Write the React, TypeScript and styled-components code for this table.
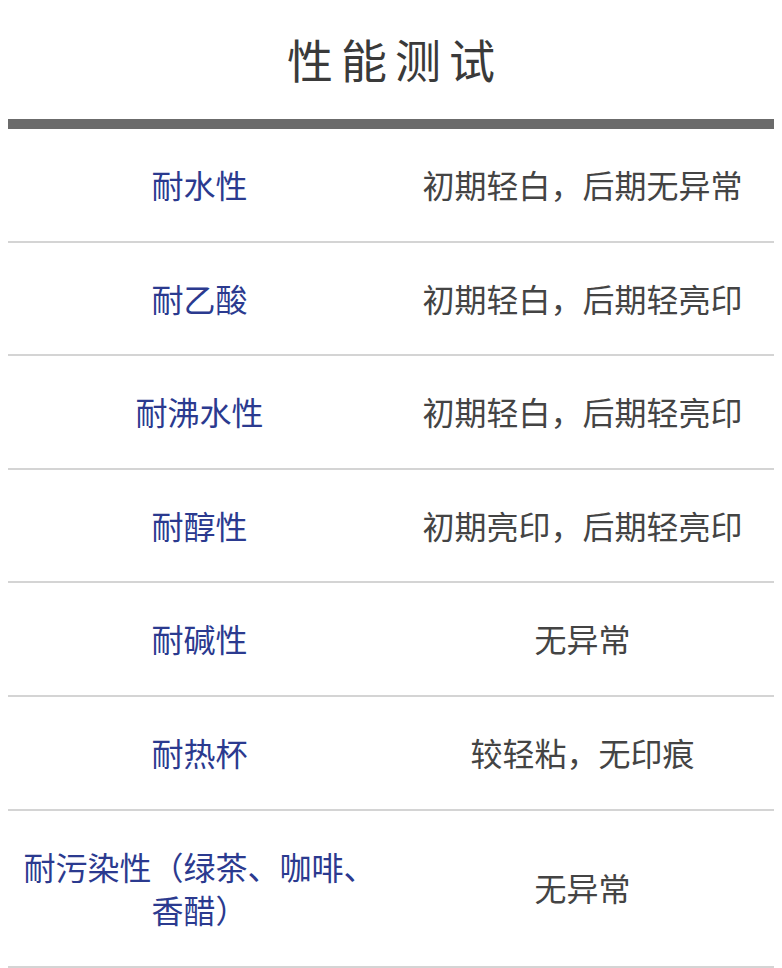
import React from "react";
import styled, { createGlobalStyle } from "styled-components";

const GlobalStyle = createGlobalStyle`
  body {
    margin: 0;
    background: #fff;
    font-family: "Noto Sans CJK SC", "Noto Sans", sans-serif;
  }
`;

const Page = styled.div`
  width: 782px;
  padding: 0 8px;
  box-sizing: border-box;
`;

const Title = styled.h1`
  margin: 0;
  padding: 25px 0 0;
  height: 119px;
  box-sizing: border-box;
  text-align: center;
  font-size: 46px;
  font-weight: 400;
  line-height: 66px;
  letter-spacing: 8px;
  text-indent: 8px;
  color: #3a3a3a;
`;

const HeadBar = styled.div`
  height: 10px;
  background: #6b6b6b;
`;

const Row = styled.div`
  display: grid;
  grid-template-columns: 1fr 1fr;
  align-items: center;
  border-bottom: 2px solid #d4d4d4;
  padding: 34px 0;
`;

const Cell = styled.div<{ $label?: boolean }>`
  padding: 0 10px;
  text-align: center;
  font-size: 32px;
  line-height: 43.6px;
  color: ${(p) => (p.$label ? "#2b3a8f" : "#444")};
`;

const rows: [string, string][] = [
  ["耐水性", "初期轻白，后期无异常"],
  ["耐乙酸", "初期轻白，后期轻亮印"],
  ["耐沸水性", "初期轻白，后期轻亮印"],
  ["耐醇性", "初期亮印，后期轻亮印"],
  ["耐碱性", "无异常"],
  ["耐热杯", "较轻粘，无印痕"],
  ["耐污染性（绿茶、咖啡、香醋）", "无异常"],
];

export default function App() {
  return (
    <Page>
      <GlobalStyle />
      <Title>性能测试</Title>
      <HeadBar />
      {rows.map(([label, result]) => (
        <Row key={label}>
          <Cell $label>{label}</Cell>
          <Cell>{result}</Cell>
        </Row>
      ))}
    </Page>
  );
}
